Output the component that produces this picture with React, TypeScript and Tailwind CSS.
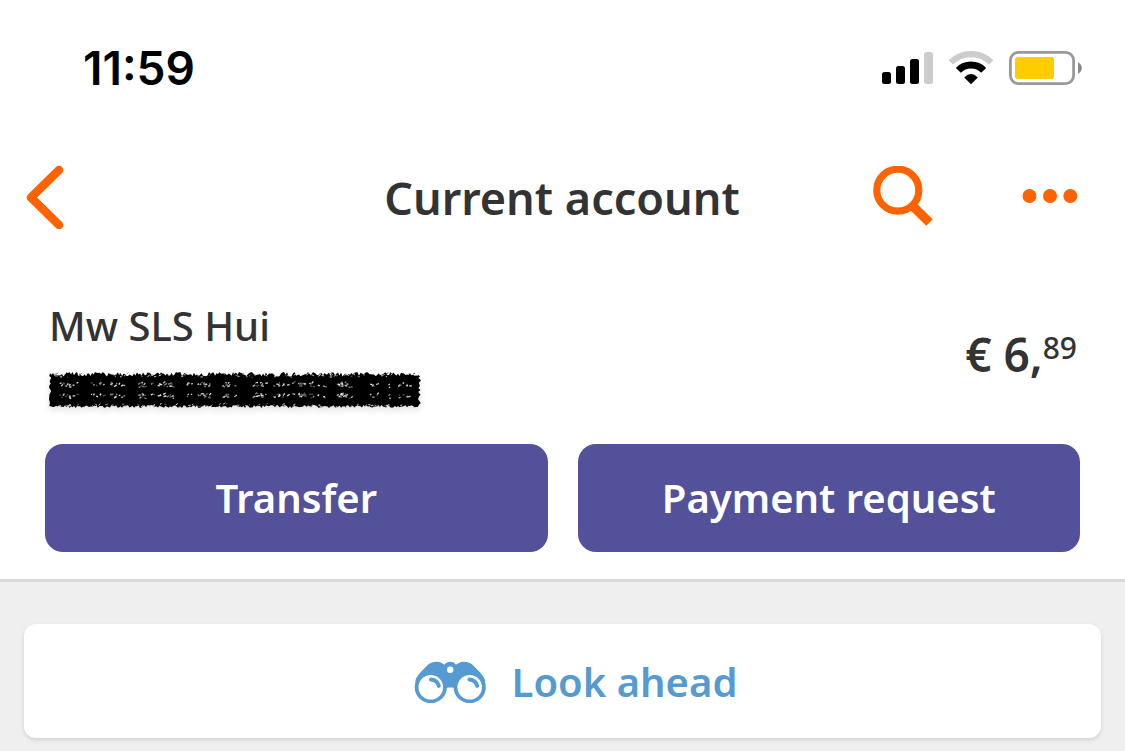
import React from "react";

function SignalIcon() {
  return (
    <svg width="51" height="34" viewBox="0 0 51 34" aria-label="Signal" role="img">
      <rect x="0" y="21" width="9" height="12" rx="2.5" fill="#000" />
      <rect x="14" y="15" width="9" height="18" rx="2.5" fill="#000" />
      <rect x="28" y="8" width="9" height="25" rx="2.5" fill="#000" />
      <rect x="42" y="1" width="9" height="32" rx="2.5" fill="#ccc" />
    </svg>
  );
}

function WifiIcon() {
  return (
    <svg width="46" height="34" viewBox="0 0 46 34" aria-label="Wi-Fi" role="img">
      <path d="M2.8 11.4A28.6 28.6 0 0 1 43.2 11.4" fill="none" stroke="#ccc" strokeWidth="6.2" />
      <path d="M10.3 19.4A17.8 17.8 0 0 1 35.7 19.4" fill="none" stroke="#000" strokeWidth="7" />
      <path d="M16.2 26.4Q23 19.6 29.8 26.4L23 33.2Z" fill="#000" />
    </svg>
  );
}

function BatteryIcon() {
  return (
    <svg width="74" height="34" viewBox="0 0 74 34" aria-label="Battery" role="img">
      <rect x="1.4" y="1.4" width="63.2" height="31.2" rx="8" fill="none" stroke="#999" strokeWidth="2.8" />
      <rect x="6" y="6" width="39" height="22" rx="3" fill="#fc0" />
      <path d="M69 11.5C74 13 74 21 69 22.5Z" fill="#888" />
    </svg>
  );
}

function BackIcon() {
  return (
    <svg width="38" height="64" viewBox="0 0 38 64" aria-hidden="true">
      <path d="M33 5L5 32.5L33 60" fill="none" stroke="#ff6200" strokeWidth="8.6" strokeLinecap="round" strokeLinejoin="round" />
    </svg>
  );
}

function SearchIcon() {
  return (
    <svg width="61" height="61" viewBox="0 0 61 61" aria-hidden="true">
      <circle cx="24.8" cy="24.2" r="21" fill="none" stroke="#ff6200" strokeWidth="7.2" />
      <path d="M39 39.5L56.5 56.5" stroke="#ff6200" strokeWidth="9.4" />
    </svg>
  );
}

function MoreIcon() {
  return (
    <svg width="56" height="16" viewBox="0 0 56 16" aria-hidden="true" fill="#ff6200">
      <circle cx="7.5" cy="8" r="7" />
      <circle cx="28" cy="8" r="7" />
      <circle cx="48.3" cy="8" r="7" />
    </svg>
  );
}

function BinocularsIcon() {
  return (
    <svg width="73" height="42" viewBox="0 0 73 42" aria-hidden="true">
      <path
        d="M1.2 20.5C2 16.5 4.5 13.5 7.5 10.3L14.5 3.3C18 .2 24.5 0 28 2.2L30.6 3.8C32.6 -.4 39.9 -.4 41.9 3.8L44.5 2.2C48 0 54.5 .2 58 3.3L65 10.3C68 13.5 70.5 16.5 71.3 20.5L57 29H44.5C42 26.6 38.5 26.4 36.3 26.4C34 26.4 30.5 26.6 28 29H15Z"
        fill="#559bd1"
      />
      <circle cx="16.8" cy="26.2" r="14.2" fill="#fff" stroke="#559bd1" strokeWidth="3.8" />
      <circle cx="55.7" cy="26.2" r="14.2" fill="#fff" stroke="#559bd1" strokeWidth="3.8" />
      <circle cx="36.2" cy="8.7" r="3.2" fill="#fff" />
      <path d="M17 18.4C21.2 18.8 23.9 21 24.8 24.9" fill="none" stroke="#559bd1" strokeWidth="4" strokeLinecap="round" />
      <path d="M55.4 18.4C59.6 18.8 62.3 21 63.2 24.9" fill="none" stroke="#559bd1" strokeWidth="4" strokeLinecap="round" />
    </svg>
  );
}

function createRandom(seed: number) {
  let state = seed;
  return () => {
    state = (state * 1664525 + 1013904223) % 4294967296;
    return state / 4294967296;
  };
}

function buildMarker() {
  const random = createRandom(59);
  const edge: string[] = [];
  for (let x = 1; x <= 370; x += 1.5) edge.push(`${x.toFixed(1)} ${(random() * 4.5).toFixed(1)}`);
  for (let y = 3; y <= 34; y += 1.5) edge.push(`${(369 + random() * 3).toFixed(1)} ${y}`);
  for (let x = 370; x >= 1; x -= 1.5) edge.push(`${x.toFixed(1)} ${(33 + random() * 3).toFixed(1)}`);
  for (let y = 34; y >= 3; y -= 1.5) edge.push(`${(random() * 2.5).toFixed(1)} ${y}`);

  const specks: { d: string; tone: string; width: number }[] = [];
  const tones = ["#555", "#888", "#bbb", "#e5e5e5"];
  const addSpeck = (x: number, y: number, width: number) => {
    const dx = 0.8 + random() * 1.8;
    const dy = (random() - 0.65) * 3;
    specks.push({
      d: `M${x.toFixed(1)} ${y.toFixed(1)}l${dx.toFixed(1)} ${dy.toFixed(1)}`,
      tone: tones[Math.floor(random() * tones.length)],
      width,
    });
  };

  // The same clusters repeat on both inner passes of the marker.
  for (let i = 0; i < 62; i++) {
    const center = 8 + random() * 356;
    const count = 1 + Math.floor(random() * 4);
    for (let j = 0; j < count; j++) {
      const x = center + (random() - 0.5) * 7;
      const offset = (random() - 0.5) * 4;
      addSpeck(x, 13 + offset, 1.3);
      addSpeck(x, 24 + offset, 1.3);
    }
  }
  for (let i = 0; i < 80; i++) {
    addSpeck(4 + random() * 362, 2 + random() * 3, 1);
    addSpeck(4 + random() * 362, 32 + random() * 3, 1);
  }
  return { outline: `M${edge.join("L")}Z`, specks };
}

const marker = buildMarker();

function MarkerStroke() {
  return (
    <svg width="372" height="40" viewBox="0 0 372 40" role="img" aria-label="Hidden account number" className="drop-shadow-md">
      <path d={marker.outline} fill="#000" />
      {marker.specks.map((speck, index) => (
        <path key={index} d={speck.d} stroke={speck.tone} strokeWidth={speck.width} />
      ))}
    </svg>
  );
}

export default function App() {
  return (
    <div className="flex min-h-screen flex-col bg-[#efefef] font-['Noto_Sans',sans-serif] text-[#333]">
      <header className="border-b-[3px] border-[#d9d9d9] bg-white pb-[27px]">
        <div className="flex h-[136px] items-center justify-between pr-[42px] pl-[83px]">
          <time className="font-['Inter',sans-serif] text-[46px] leading-none font-semibold text-black">11:59</time>
          <div className="flex items-center gap-[15px]">
            <SignalIcon />
            <WifiIcon />
            <BatteryIcon />
          </div>
        </div>

        <nav className="grid h-[122px] grid-cols-[1fr_auto_1fr] items-center pr-[47px] pl-[26px]">
          <button type="button" aria-label="Back" className="justify-self-start">
            <BackIcon />
          </button>
          <h1 className="ml-[20px] pt-[2px] text-[45px] leading-[60px] font-semibold">Current account</h1>
          <div className="flex items-center gap-[88px] justify-self-end pb-[2px]">
            <button type="button" aria-label="Search">
              <SearchIcon />
            </button>
            <button type="button" aria-label="More options">
              <MoreIcon />
            </button>
          </div>
        </nav>

        <section className="flex items-center justify-between pt-[38px] pr-[48px] pb-[32px] pl-[49px]">
          <div>
            <h2 className="mb-[16px] text-[40px] leading-[60px] font-medium">Mw SLS Hui</h2>
            <MarkerStroke />
          </div>
          <p className="flex items-start text-[46px] leading-[60px] font-semibold">
            € 6,<span className="text-[30px] leading-[48px] font-medium">89</span>
          </p>
        </section>

        <div className="grid grid-cols-2 gap-[30px] px-[45px]">
          <button type="button" className="h-[108px] rounded-[18px] bg-[#525199] text-[40px] font-semibold text-white">
            Transfer
          </button>
          <button type="button" className="h-[108px] rounded-[18px] bg-[#525199] text-[40px] font-semibold text-white">
            Payment request
          </button>
        </div>
      </header>

      <main className="px-[24px] pt-[42px]">
        <button
          type="button"
          className="flex h-[114px] w-full items-center justify-center gap-[25px] rounded-[12px] bg-white pt-[2px] pl-[26px] text-[40px] font-semibold text-[#559bd1] shadow-[0_2px_4px_rgba(0,0,0,0.12)]"
        >
          <BinocularsIcon />
          Look ahead
        </button>
      </main>
    </div>
  );
}
